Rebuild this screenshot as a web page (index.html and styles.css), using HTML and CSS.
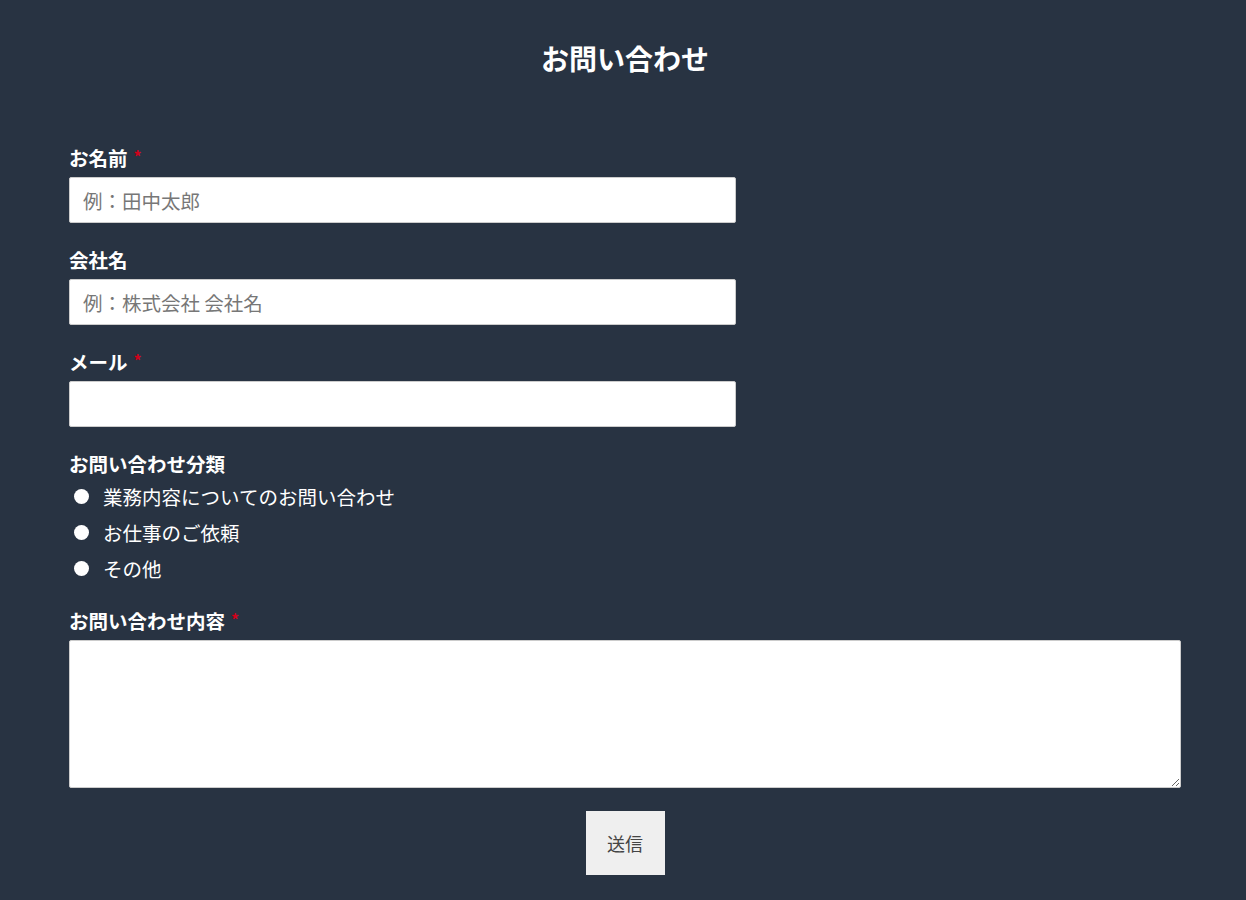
FILE: index.html
```html
<!DOCTYPE html>
<html lang="ja">
<head>
    <meta charset="UTF-8">
    <meta name="viewport" content="width=device-width, initial-scale=1.0">
    <title>お問い合わせ</title>
    <link rel="stylesheet" href="styles.css">
</head>
<body>
    <div class="contact">
        <h1>お問い合わせ</h1>
        <form id="contact-form">
            <div class="form-group">
                <label for="name">お名前<span class="req">*</span></label>
                <input type="text" id="name" name="name" class="short" placeholder="例：田中太郎">
            </div>
            <div class="form-group">
                <label for="company">会社名</label>
                <input type="text" id="company" name="company" class="short" placeholder="例：株式会社 会社名">
            </div>
            <div class="form-group">
                <label for="mail">メール<span class="req">*</span></label>
                <input type="email" id="mail" name="mail" class="short">
            </div>
            <div class="form-group radios">
                <label>お問い合わせ分類</label>
                <div class="radio"><input type="radio" id="type1" name="type"><span>業務内容についてのお問い合わせ</span></div>
                <div class="radio"><input type="radio" id="type2" name="type"><span>お仕事のご依頼</span></div>
                <div class="radio"><input type="radio" id="type3" name="type"><span>その他</span></div>
            </div>
            <div class="form-group">
                <label for="message">お問い合わせ内容<span class="req">*</span></label>
                <textarea id="message" name="message"></textarea>
            </div>
            <div class="submit">
                <button type="submit">送信</button>
            </div>
        </form>
    </div>
</body>
</html>
```

FILE: styles.css
```css
body {
    font-family: "Noto Sans CJK JP", "Noto Sans", sans-serif;
    background-color: #283342;
    color: #fff;
    margin: 0;
}
.contact {
    width: 1112px;
    padding: 0 0 0 69px;
}
h1 {
    text-align: center;
    font-size: 28px;
    line-height: 40px;
    margin: 38px 0 66px 0;
}
.form-group {
    margin-bottom: 23px;
}
.form-group label {
    display: block;
    height: 28px;
    font-size: 19.5px;
    font-weight: bold;
    line-height: 28px;
    margin-bottom: 5px;
}
.req {
    color: #d0021b;
    font-size: 16px;
    line-height: 0;
    margin-left: 6px;
    vertical-align: 3px;
}
.form-group input.short {
    display: block;
    width: 667px;
    height: 46px;
    box-sizing: border-box;
    border: 1px solid #ccc;
    border-radius: 2px;
    padding: 0 13px;
    font-family: inherit;
    font-size: 19.5px;
    color: #333;
}
.form-group input::placeholder {
    color: #777;
}
.radios {
    margin-bottom: 21px;
}
.radios label {
    margin-bottom: 0;
}
.radio {
    display: flex;
    align-items: center;
    height: 36px;
    font-size: 19.5px;
}
.radio input {
    appearance: none;
    width: 15px;
    height: 15px;
    border-radius: 50%;
    background: #fff;
    margin: 0 14px 0 5px;
}
textarea {
    display: block;
    width: 1112px;
    height: 148px;
    box-sizing: border-box;
    border: 1px solid #ccc;
    border-radius: 2px;
    font-family: inherit;
    font-size: 19px;
}
.submit {
    display: flex;
    justify-content: center;
    margin-top: 2px;
}
.submit button {
    width: 79px;
    height: 64px;
    background-color: #efefef;
    color: #444;
    border: none;
    font-family: inherit;
    font-size: 18px;
    cursor: pointer;
}
```
